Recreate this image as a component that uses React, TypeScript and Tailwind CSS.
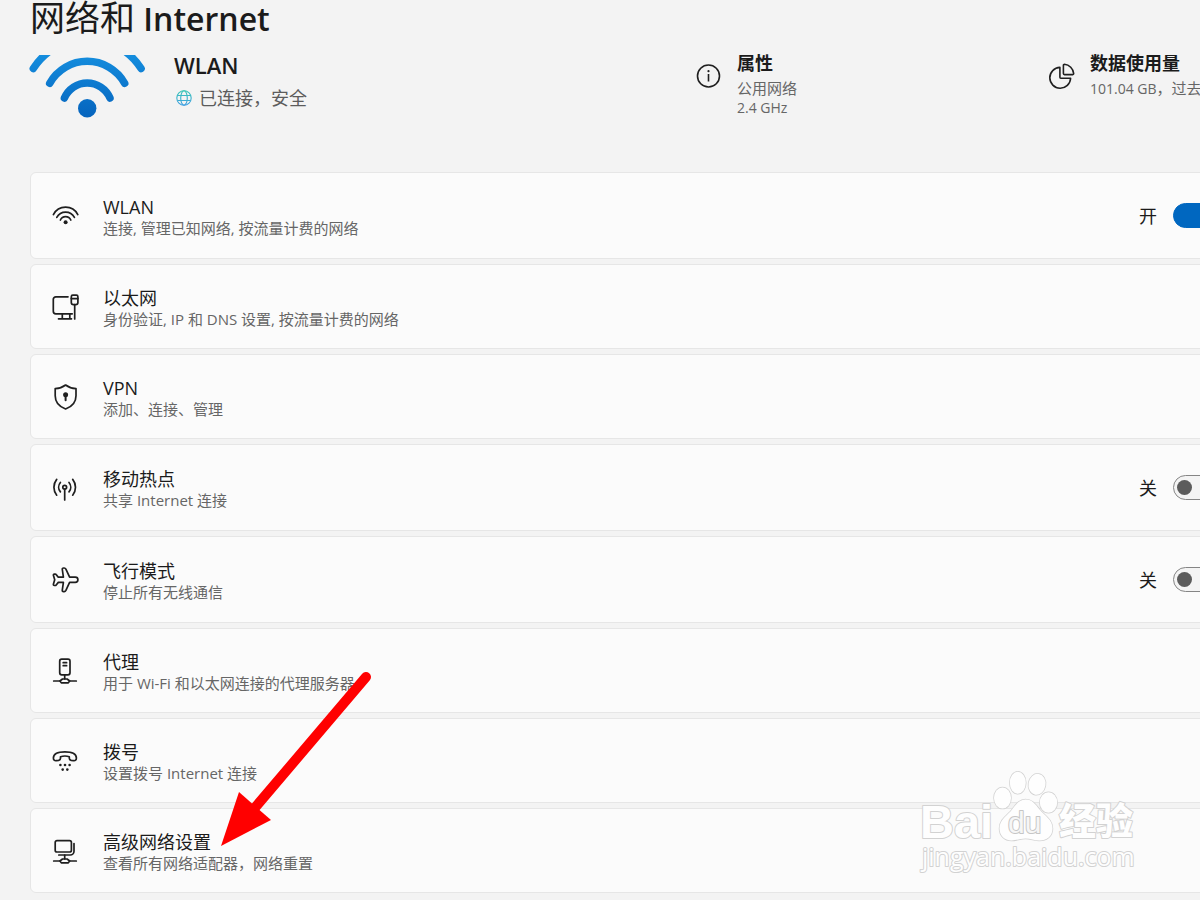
import React, { useState } from 'react';

type IconProps = { children: React.ReactNode };

const Icon: React.FC<IconProps> = ({ children }) => (
  <svg
    viewBox="0 0 28 28"
    className="w-7 h-7 shrink-0"
    fill="none"
    stroke="#1f1f1f"
    strokeWidth="1.7"
    strokeLinecap="round"
    strokeLinejoin="round"
    aria-hidden="true"
  >
    {children}
  </svg>
);

const NetworkBase = () => (
  <>
    <path d="M13.7 18v3.8" />
    <path d="M2.7 24h6.5M18.5 24h6.8" />
    <path d="M11.5 22h4.6l2.6 2-1.4 1.8h-7L8.9 24z" />
  </>
);

const WlanIcon = () => (
  <Icon>
    <path d="M2.4 12.6a13.7 13.7 0 0 1 24.4 0" />
    <path d="M5.8 15.4a10 10 0 0 1 17.6 0" />
    <path d="M9.4 18a5.7 5.7 0 0 1 10.4 0" />
    <circle cx="14.6" cy="20.2" r="2" fill="#1f1f1f" stroke="none" />
  </Icon>
);

const EthernetIcon = () => (
  <Icon>
    <path d="M17 3.8H4.8a2.5 2.5 0 0 0-2.5 2.5v12a2.5 2.5 0 0 0 2.5 2.5h16.4" />
    <path d="M11.3 20.8v5M18.8 20.8v5M7.5 25.8h13" />
    <path d="M20.3 5.6V3.8c0-1 .6-1.600 1.500-1.600h3.600c.9 0 1.500.6 1.500 1.600v1.800" />
    <path d="M20.3 5.6h6.6v3.800a2.200 2.200 0 0 1-2.200 2.200h-2.200a2.200 2.200 0 0 1-2.200-2.200z" />
    <path d="M23.7 11.600V26" />
  </Icon>
);

const VpnIcon = () => (
  <Icon>
    <path d="M14.6 2c2.9 2.2 6.4 3.4 10.4 3.6v7.2c0 6.4-3.6 10.8-10.4 13.2C7.8 23.6 4.2 19.2 4.2 12.8V5.6c4-.2 7.500-1.400 10.400-3.600z" />
    <circle cx="14.6" cy="11.8" r="2.5" fill="#1f1f1f" stroke="none" />
    <path d="M14.6 12v5.2" strokeWidth="2" />
  </Icon>
);

const HotspotIcon = () => (
  <Icon>
    <circle cx="13.7" cy="13.2" r="1.9" />
    <path d="M13.7 15.4V26" />
    <path d="M9.4 8.5a7.2 7.2 0 0 0 0 9.4M18 8.5a7.2 7.2 0 0 1 0 9.4" />
    <path d="M5.7 5.4a12.6 12.6 0 0 0 0 15.8M21.7 5.4a12.6 12.6 0 0 1 0 15.8" />
  </Icon>
);

const AirplaneIcon = () => (
  <Icon>
    <path d="M24.3 11.2h-5.700L14.900 3.200c-.4-.8-.9-1.200-1.600-1.200h-.8c-.9 0-1.400.7-1.200 1.500l1.100 7.700H7.300L5.200 8.600c-.3-.4-.6-.5-1-.5h-.9c-.7 0-1 .6-.9 1.200l1.300 4.500-1.300 4.500c-.1.600.2 1.200.9 1.200h.9c.4 0 .7-.1 1-.5l2.100-2.600h5.100l-1.100 7.700c-.2.800.3 1.500 1.200 1.500h.8c.7 0 1.200-.4 1.600-1.200l3.700-8h5.700a2.600 2.600 0 0 0 0-5.200z" />
  </Icon>
);

const ProxyIcon = () => (
  <Icon>
    <rect x="8.7" y="2.2" width="10.3" height="15.6" rx="2" />
    <path d="M12.2 5.7h3.4M12.2 8.7h3.4" />
    <NetworkBase />
  </Icon>
);

const DialIcon = () => (
  <Icon>
    <path d="M2.4 11C2.4 6.8 7.5 4.8 13.9 4.8S25.4 6.8 25.4 11c0 2-1.2 3-2.9 2.7l-2.3-.4c-1.3-.3-1.9-1-1.9-2.1V9.7c-2.7-.9-6-.9-8.8 0v1.500c0 1.100-.6 1.800-1.900 2.100l-2.300.4C3.600 14 2.400 13 2.400 11z" />
    <g fill="#1f1f1f" stroke="none">
      <circle cx="9.4" cy="18" r="1.3" />
      <circle cx="14" cy="18" r="1.3" />
      <circle cx="18.6" cy="18" r="1.3" />
      <circle cx="11.7" cy="22.6" r="1.3" />
      <circle cx="16.3" cy="22.6" r="1.3" />
    </g>
  </Icon>
);

const AdvancedIcon = () => (
  <Icon>
    <rect x="4.2" y="3.6" width="16.2" height="11.4" rx="1.8" />
    <path d="M23 6.6v7.6a3.8 3.8 0 0 1-3.800 3.800H7.800" />
    <NetworkBase />
  </Icon>
);

interface SettingItem {
  id: string;
  title: string;
  desc: string;
  icon: React.FC;
  enabled?: boolean;
}

const items: SettingItem[] = [
  { id: 'wlan', title: 'WLAN', desc: '连接, 管理已知网络, 按流量计费的网络', icon: WlanIcon, enabled: true },
  { id: 'ethernet', title: '以太网', desc: '身份验证, IP 和 DNS 设置, 按流量计费的网络', icon: EthernetIcon },
  { id: 'vpn', title: 'VPN', desc: '添加、连接、管理', icon: VpnIcon },
  { id: 'hotspot', title: '移动热点', desc: '共享 Internet 连接', icon: HotspotIcon, enabled: false },
  { id: 'airplane', title: '飞行模式', desc: '停止所有无线通信', icon: AirplaneIcon, enabled: false },
  { id: 'proxy', title: '代理', desc: '用于 Wi-Fi 和以太网连接的代理服务器', icon: ProxyIcon },
  { id: 'dial', title: '拨号', desc: '设置拨号 Internet 连接', icon: DialIcon },
  { id: 'advanced', title: '高级网络设置', desc: '查看所有网络适配器，网络重置', icon: AdvancedIcon },
];

const SettingText: React.FC<{ item: SettingItem }> = ({ item }) => (
  <span className="flex flex-col pt-1 text-left">
    <span className="text-[18px] leading-[21px] text-[#1b1b1b]">{item.title}</span>
    <span className="text-[15px] leading-[21px] text-[#666666]">{item.desc}</span>
  </span>
);

const cardClass = 'flex w-full items-center gap-6 rounded-md border border-[#e6e6e6] bg-[#fbfbfb] pl-5 pr-7';

const SettingRow: React.FC<{ item: SettingItem }> = ({ item }) => {
  const [on, setOn] = useState(item.enabled ?? false);
  const ItemIcon = item.icon;

  if (item.enabled === undefined) {
    return (
      <button type="button" className={`${cardClass} min-h-[85px]`}>
        <ItemIcon />
        <SettingText item={item} />
      </button>
    );
  }

  return (
    <div className={`${cardClass} min-h-[87px]`}>
      <ItemIcon />
      <SettingText item={item} />
      <label className="ml-auto flex items-center gap-4 text-[18px] text-[#1b1b1b]">
        <span className="pt-0.5">{on ? '开' : '关'}</span>
        <input
          type="checkbox"
          role="switch"
          aria-label={item.title}
          checked={on}
          onChange={(e) => setOn(e.target.checked)}
          className="flex h-[25px] w-[50px] appearance-none items-center rounded-full border border-[#858585] bg-[#f4f4f4] px-[3px] before:h-[15px] before:w-[15px] before:rounded-full before:bg-[#5c5c5c] checked:justify-end checked:border-[#0067c0] checked:bg-[#0067c0] checked:before:bg-white"
        />
      </label>
    </div>
  );
};

const WifiLogo = () => (
  <svg viewBox="28 55 118 64" className="w-[118px] h-16 shrink-0" fill="none" aria-hidden="true">
    <defs>
      <linearGradient id="wifi" x1="0" y1="50" x2="0" y2="118" gradientUnits="userSpaceOnUse">
        <stop offset="0" stopColor="#1590e0" />
        <stop offset="1" stopColor="#0563bd" />
      </linearGradient>
    </defs>
    <g stroke="url(#wifi)" strokeWidth="7.5" strokeLinecap="round">
      <path d="M33.3 68.5a64 64 0 0 1 107.8 0" />
      <path d="M49.7 83.3a43 43 0 0 1 75 0" />
      <path d="M64.4 98a24.8 24.8 0 0 1 45.6 0" />
    </g>
    <circle cx="87.2" cy="108.3" r="9.2" fill="url(#wifi)" />
  </svg>
);

const GlobeIcon = () => (
  <svg viewBox="0 0 16 16" className="w-4 h-4 shrink-0" fill="none" stroke="url(#globe)" strokeWidth="1.1" aria-hidden="true">
    <defs>
      <linearGradient id="globe" x1="0" y1="0" x2="0" y2="16" gradientUnits="userSpaceOnUse">
        <stop offset="0" stopColor="#3cc8b4" />
        <stop offset="1" stopColor="#3c9ce4" />
      </linearGradient>
    </defs>
    <circle cx="8" cy="8" r="7.2" />
    <ellipse cx="8" cy="8" rx="3.3" ry="7.2" />
    <path d="M1.5 5.5h13M1.5 10.5h13" />
  </svg>
);

const InfoIcon = () => (
  <svg viewBox="0 0 26 26" className="w-[26px] h-[26px] shrink-0" fill="none" stroke="#1f1f1f" strokeWidth="1.6" aria-hidden="true">
    <circle cx="12.5" cy="13" r="11" />
    <path d="M12.5 11v7.5" />
    <circle cx="12.5" cy="8.2" r="1.1" fill="#1f1f1f" stroke="none" />
  </svg>
);

const PieIcon = () => (
  <svg viewBox="0 0 26 26" className="w-[26px] h-[26px] shrink-0" fill="none" stroke="#1f1f1f" strokeWidth="1.6" strokeLinejoin="round" aria-hidden="true">
    <path d="M10.9 4.400v9.800c0 .6.400 1 1 1h9.700A10.400 10.400 0 1 1 10.900 4.400z" />
    <path d="M14.4 2.200c0-.6.400-.9 1-.9a10.300 10.300 0 0 1 9.300 9.300c0 .6-.3 1-.9 1h-8.400c-.6 0-1-.4-1-1z" />
  </svg>
);

const Pointer = () => (
  <svg viewBox="0 0 154 176" className="pointer-events-none absolute left-[219px] top-[671px] w-[154px] h-[176px]" aria-hidden="true">
    <path d="M147 6L34 139" stroke="#ff0000" strokeWidth="10" strokeLinecap="round" />
    <path d="M2 175L20 121L52 149z" fill="#ff0000" />
  </svg>
);

const Watermark = () => (
  <svg viewBox="0 0 240 110" className="pointer-events-none absolute left-[910px] top-[768px] w-[240px] h-[110px]" aria-hidden="true">
    <g fill="#fefefe" stroke="#d2d2d2" strokeWidth="2" strokeLinejoin="round" paintOrder="stroke">
      <text x="10" y="70" className="font-['Liberation_Sans',sans-serif] text-[47px] font-bold">Bai</text>
      <g strokeWidth="1.5">
        <ellipse cx="92.5" cy="30" rx="8.5" ry="10.5" />
        <ellipse cx="107.8" cy="14.8" rx="8" ry="11" />
        <ellipse cx="127" cy="16.3" rx="8.5" ry="10.5" transform="rotate(10 127 16.3)" />
        <ellipse cx="138.5" cy="34.5" rx="8.7" ry="10.3" />
        <path d="M115.5 31.5c7 0 10 5 14 10 5 6 13 10 13 19 0 8-6 12-13 12-5 0-9-2-14-2s-9 2-14 2c-7 0-12-5-12-12 0-8 6-12 11-17 5-6 8-12 15-12z" />
      </g>
      <text x="98" y="65" fill="#f6f6f6" stroke="#c6c6c6" className="font-['Liberation_Sans',sans-serif] text-[30px]">du</text>
      <text x="149" y="67" className="font-['Noto_Sans_CJK_SC',sans-serif] text-[37px] font-black">经验</text>
      <text x="12" y="98" className="font-['Open_Sans',sans-serif] text-[25px]">jingyan.baidu.com</text>
    </g>
  </svg>
);

export default function App() {
  return (
    <div className="relative min-h-screen overflow-hidden bg-[#f3f3f3] font-['Open_Sans','Noto_Sans_CJK_SC',sans-serif] text-[#1b1b1b]">
      {/* the settings panel runs on past the right edge of the window */}
      <main className="w-[calc(100%+52px)] pl-[30px]">
        <h1 className="h-9 text-[32px] leading-[35px] font-semibold">
          <span className="text-[35px] font-normal">网络和</span> Internet
        </h1>

        <section className="grid h-[136px] grid-cols-[1fr_353px_203px] items-start pt-[15px]">
          <div className="-ml-0.5 flex gap-7 pt-1">
            <WifiLogo />
            <div>
              <h2 className="text-[22px] leading-5 font-semibold">WLAN</h2>
              <p className="mt-[11px] flex items-center gap-[7px] pl-0.5 text-[18px] leading-6 text-[#5c5c5c]">
                <GlobeIcon />
                已连接，安全
              </p>
            </div>
          </div>
          <div className="flex gap-[15px]">
            <div className="pt-3">
              <InfoIcon />
            </div>
            <div className="text-[15px] leading-5 text-[#666666]">
              <h3 className="mb-[3px] text-[18px] leading-6 font-semibold text-[#1b1b1b]">属性</h3>
              <p>公用网络</p>
              <p className="text-[14px] leading-5">2.4 GHz</p>
            </div>
          </div>
          <div className="flex gap-[15px]">
            <div className="pt-3">
              <PieIcon />
            </div>
            <div className="whitespace-nowrap text-[15px] leading-5 text-[#666666]">
              <h3 className="mb-[3px] text-[18px] leading-6 font-semibold text-[#1b1b1b]">数据使用量</h3>
              <p>
                <span className="text-[14px]">101.04 GB</span>，过去
              </p>
            </div>
          </div>
        </section>

        <ul className="flex flex-col gap-[5px]">
          {items.map((item) => (
            <li key={item.id}>
              <SettingRow item={item} />
            </li>
          ))}
        </ul>
      </main>

      <Watermark />
      <Pointer />
    </div>
  );
}
